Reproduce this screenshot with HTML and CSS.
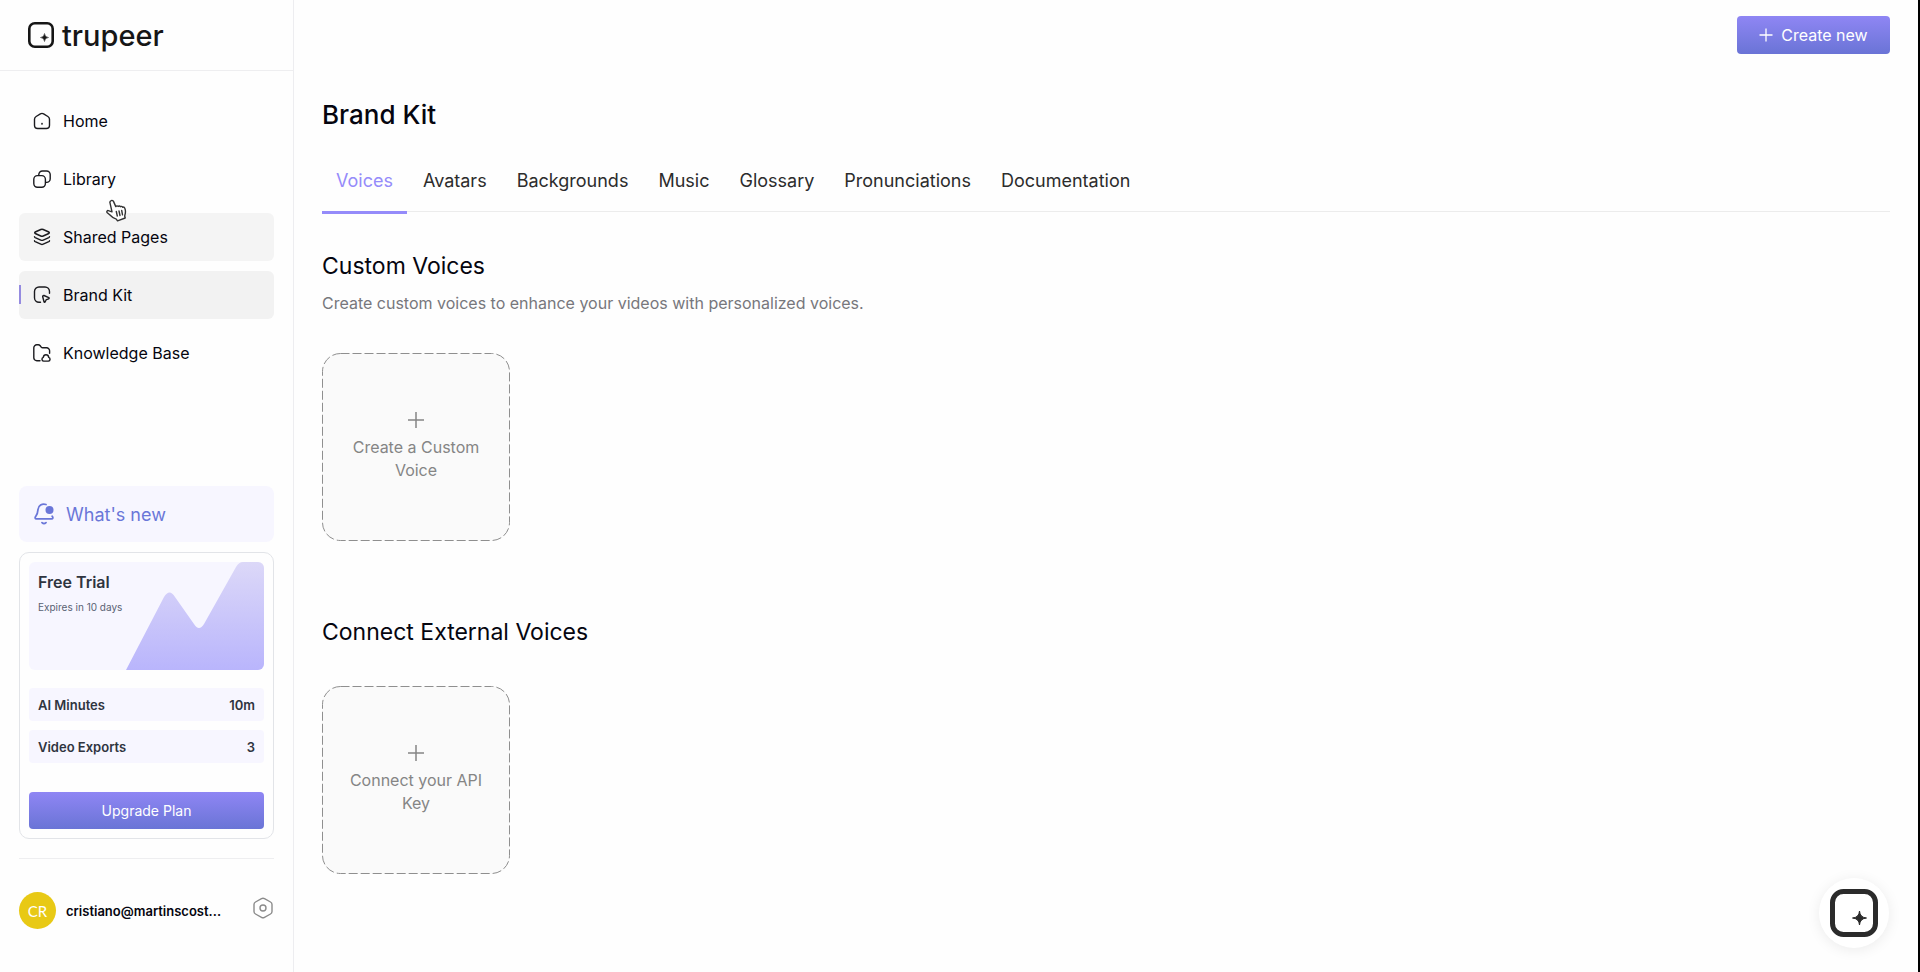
FILE: index.html
```html
<!DOCTYPE html>
<html lang="en">
<head>
  <meta charset="UTF-8">
  <meta name="viewport" content="width=device-width, initial-scale=1.0">
  <title>Brand Kit - trupeer</title>
  <link rel="stylesheet" href="styles.css">
</head>
<body>
  <aside class="sidebar">
    <a class="logo" href="#">
      <svg width="26" height="26" viewBox="0 0 26 26" fill="none">
        <rect x="1.3" y="1.3" width="23.4" height="23.4" rx="5.5" stroke="#161616" stroke-width="2.6"/>
        <path d="M16.5 11.5Q16.800 15.200 20.500 15.500Q16.800 15.800 16.500 19.500Q16.200 15.800 12.500 15.500Q16.200 15.200 16.500 11.500Z" fill="#161616" stroke="#161616" stroke-width=".5"/>
      </svg>
      <span>trupeer</span>
    </a>

    <nav class="nav">
      <a class="nav-item" href="#">
        <svg width="18" height="18" viewBox="0 0 18 18">
          <path d="M7.4 1.9a3 3 0 0 1 3.2 0l4.3 2.6a3.2 3.2 0 0 1 1.6 2.8v6a3.2 3.2 0 0 1-3.2 3.2H4.7a3.2 3.2 0 0 1-3.2-3.2v-6a3.2 3.2 0 0 1 1.6-2.8z"/>
          <circle cx="9" cy="11.8" r=".3"/>
        </svg>
        Home
      </a>
      <a class="nav-item" href="#">
        <svg width="18" height="18" viewBox="0 0 18 18">
          <rect x=".8" y="5.6" width="11.6" height="11.6" rx="3.6"/>
          <path d="M5.8 5.4V4.6A3.6 3.6 0 0 1 9.4 1h4.2a3.6 3.6 0 0 1 3.6 3.6v4.2a3.6 3.6 0 0 1-3.6 3.6h-1"/>
        </svg>
        Library
        <svg class="cursor" width="21" height="23" viewBox="0 0 21 23">
          <path d="M5.2 1.6c1-.5 2 .1 2.4 1l2.2 5c.5-.9 1.8-.9 2.3-.1.6-.8 1.8-.7 2.3.2.7-.6 1.8-.3 2.2.6.9-.4 1.8 0 2.2.9.7 1.7.9 3.5.4 5.6l-.5 2.2.5 2-7.7 2.8-1.2-1.6c-2-.6-4.4-2-6.6-4.4L1 13.4c-.5-1 .2-2 1.3-1.8l3.7 1.2-2-8.9c-.3-1 .2-1.9 1.2-2.3z"/>
          <path d="M10.3 12.5l1 4.5M13 12l1 4.5M15.7 11.5l.8 4.3"/>
        </svg>
      </a>
      <a class="nav-item hover" href="#">
        <svg width="18" height="18" viewBox="0 0 18 18">
          <path d="M7.8 1.5a3 3 0 0 1 2.4 0l5.600 2.500a.8.8 0 0 1 0 1.500l-5.600 2.500a3 3 0 0 1-2.400 0L2.200 5.500a.8.8 0 0 1 0-1.500z"/>
          <path d="M1.500 8.600c0 .5.300.8.700 1l5.600 2.500a3 3 0 0 0 2.400 0l5.600-2.500c.4-.2.700-.5.700-1"/>
          <path d="M1.500 12.700c0 .5.300.8.700 1l5.600 2.500a3 3 0 0 0 2.400 0l5.600-2.500c.4-.2.700-.5.700-1"/>
        </svg>
        Shared Pages
      </a>
      <a class="nav-item active" href="#">
        <svg width="18" height="18" viewBox="0 0 18 18">
          <path d="M7.500 16.200H6A4.500 4.500 0 0 1 1.500 11.700V5.500A4.500 4.500 0 0 1 6 1h6a4.500 4.500 0 0 1 4.500 4.500v1.700"/>
          <path d="M9.700 10.800l1.300 5c.2.600.9.600 1.100.1l.8-1.700c.1-.3.300-.4.500-.5l2.300-.9c.6-.2.600-.9.100-1.200l-4.800-2.100c-.8-.3-1.500.400-1.300 1.300z"/>
        </svg>
        Brand Kit
      </a>
      <a class="nav-item" href="#">
        <svg width="18" height="18" viewBox="0 0 18 18">
          <path d="M7 16.700H3.800A3 3 0 0 1 .8 13.700V3.800a3 3 0 0 1 3-3h1.400c.8 0 1.500.4 2 1l1 1.300c.4.500.9.700 1.500.7h3.900a3 3 0 0 1 3 3v2.400"/>
          <path d="M10.600 17.100a1.900 1.900 0 0 1-.3-3.700c.2-1.700 1.200-2.600 2.700-2.600s2.500.9 2.700 2.600a1.900 1.900 0 0 1-.3 3.700z"/>
        </svg>
        Knowledge Base
      </a>
    </nav>

    <div class="sidebar-bottom">
      <button class="whats-new">
        <svg width="20" height="22" viewBox="0 0 20 22" fill="none" stroke="#6a76d8" stroke-width="1.8" stroke-linecap="round">
          <path d="M12 1.500C8 .2 4.300 2.600 4 6.500c-.2 3-.5 4.500-2.200 6.700-1 1.400-.9 2.700.7 2.700h15c1.600 0 1.700-1.300.7-2.700"/>
          <path d="M8 19.600q2 1.800 4 0"/>
          <circle cx="15.500" cy="7" r="4" fill="#6a76d8" stroke="none"/>
        </svg>
        What's new
      </button>

      <section class="plan-card">
        <div class="plan-banner">
          <svg class="plan-chart" viewBox="0 0 235 108" preserveAspectRatio="xMaxYMax slice">
            <defs>
              <linearGradient id="chartFill" x1="0" y1="0" x2="0" y2="1">
                <stop offset="0" stop-color="#dcd8f8"/>
                <stop offset="1" stop-color="#b9b5fc"/>
              </linearGradient>
            </defs>
            <path d="M97 108L135 35Q140.500 26 146 35L165 62Q170 70 175 62L207 5Q210 0 214 0H235V108Z" fill="url(#chartFill)"/>
          </svg>
          <h2>Free Trial</h2>
          <p>Expires in 10 days</p>
        </div>
        <dl class="usage">
          <div class="usage-row"><dt>AI Minutes</dt><dd>10m</dd></div>
          <div class="usage-row"><dt>Video Exports</dt><dd>3</dd></div>
        </dl>
        <button class="primary upgrade">Upgrade Plan</button>
      </section>

      <div class="user">
        <span class="avatar">CR</span>
        <span class="email">cristiano@martinscost...</span>
        <button class="settings" aria-label="Settings">
          <svg width="22" height="22" viewBox="0 0 22 22" fill="none" stroke="#8b8b8b" stroke-width="1.4">
            <path d="M9.500 1.700a3 3 0 0 1 3 0l6 3.300A3 3 0 0 1 20 7.600v6.800a3 3 0 0 1-1.500 2.600l-6 3.300a3 3 0 0 1-3 0l-6-3.300A3 3 0 0 1 2 14.400V7.600A3 3 0 0 1 3.500 5z"/>
            <circle cx="11" cy="11" r="3"/>
          </svg>
        </button>
      </div>
    </div>
  </aside>

  <main class="main">
    <header class="topbar">
      <button class="primary create">
        <svg width="14" height="14" viewBox="0 0 14 14" stroke="#fff" stroke-width="1.3"><path d="M7 .5v13M.5 7h13"/></svg>
        Create new
      </button>
    </header>

    <h1>Brand Kit</h1>
    <div class="tabs" role="tablist">
      <button class="tab selected" role="tab" aria-selected="true">Voices</button>
      <button class="tab" role="tab">Avatars</button>
      <button class="tab" role="tab">Backgrounds</button>
      <button class="tab" role="tab">Music</button>
      <button class="tab" role="tab">Glossary</button>
      <button class="tab" role="tab">Pronunciations</button>
      <button class="tab" role="tab">Documentation</button>
    </div>

    <section class="voices">
      <h2>Custom Voices</h2>
      <p>Create custom voices to enhance your videos with personalized voices.</p>
      <button class="tile">
        <svg class="tile-outline" viewBox="0 0 188 188"><rect x=".5" y=".5" width="187" height="187" rx="18"/></svg>
        <svg width="16" height="16" viewBox="0 0 16 16" stroke="#858585" stroke-width="1.5"><path d="M8 0v16M0 8h16"/></svg>
        Create a Custom Voice
      </button>
    </section>

    <section class="voices">
      <h2>Connect External Voices</h2>
      <button class="tile">
        <svg class="tile-outline" viewBox="0 0 188 188"><rect x=".5" y=".5" width="187" height="187" rx="18"/></svg>
        <svg width="16" height="16" viewBox="0 0 16 16" stroke="#858585" stroke-width="1.5"><path d="M8 0v16M0 8h16"/></svg>
        Connect your API Key
      </button>
    </section>
  </main>

  <button class="recorder" aria-label="Open recorder">
    <svg width="48" height="48" viewBox="0 0 48 48" fill="none">
      <rect x="2.500" y="2.500" width="43" height="43" rx="11" stroke="#2b2b2b" stroke-width="5"/>
      <path d="M29.500 22Q30 28.500 36.500 29Q30 29.500 29.500 36Q29 29.500 22.500 29Q29 28.500 29.500 22Z" fill="#2b2b2b" stroke="#2b2b2b"/>
    </svg>
  </button>
</body>
</html>
```

FILE: styles.css
```css
* {
  box-sizing: border-box;
}
body {
  margin: 0;
  min-height: 100vh;
  display: flex;
  background: #fefefe;
  border-right: 2px solid #000;
  color: #05050f;
  font-family: Inter, "Liberation Sans", sans-serif;
  font-size: 16px;
}
h1, h2, p, dl, dd {
  margin: 0;
}
a {
  color: inherit;
  text-decoration: none;
}
button {
  font: inherit;
  color: inherit;
  border: none;
  background: none;
  padding: 0;
  cursor: pointer;
}
svg {
  flex-shrink: 0;
}

/* Sidebar */
.sidebar {
  width: 294px;
  flex-shrink: 0;
  display: flex;
  flex-direction: column;
  border-right: 1px solid #ededf0;
}
.logo {
  display: flex;
  align-items: center;
  gap: 8px;
  height: 71px;
  padding-left: 28px;
  border-bottom: 1px solid #eeeef0;
  color: #161616;
  font-size: 29px;
  font-weight: 500;
}
.nav {
  display: flex;
  flex-direction: column;
  gap: 10px;
  padding: 26px 19px;
}
.nav-item {
  position: relative;
  display: flex;
  align-items: center;
  gap: 12px;
  height: 48px;
  padding-left: 14px;
  border-radius: 6px;
}
.nav-item svg {
  fill: none;
  stroke: #1b1b1f;
  stroke-width: 1.4;
  stroke-linecap: round;
  stroke-linejoin: round;
}
.nav-item.hover {
  background: #f4f4f4;
}
.nav-item.active {
  background: #f2f2f2;
}
.nav-item.active::before {
  content: "";
  position: absolute;
  left: 0;
  top: 14px;
  width: 2px;
  height: 19px;
  background: #958be0;
}
.nav-item .cursor {
  position: absolute;
  left: 87px;
  top: 44px;
  z-index: 1;
  fill: #fff;
  stroke: #333;
}
.sidebar-bottom {
  margin-top: auto;
  padding: 0 19px 43px;
}
.whats-new {
  display: flex;
  align-items: center;
  gap: 12px;
  width: 100%;
  height: 56px;
  margin-bottom: 10px;
  padding-left: 15px;
  border-radius: 8px;
  background: #f7f6ff;
  color: #6a76d8;
  font-size: 18px;
}
.plan-card {
  padding: 9px;
  border: 1px solid #e2e4e8;
  border-radius: 10px;
}
.plan-banner {
  position: relative;
  height: 108px;
  padding: 10px 9px;
  border-radius: 6px;
  background: #f7f6ff;
  overflow: hidden;
  color: #2f3440;
}
.plan-chart {
  position: absolute;
  inset: 0;
  width: 100%;
  height: 100%;
}
.plan-banner h2 {
  font-size: 16px;
  line-height: 20px;
  font-weight: 600;
}
.plan-banner p {
  margin-top: 7px;
  font-size: 10px;
  line-height: 16px;
  color: #596273;
}
.usage {
  display: flex;
  flex-direction: column;
  gap: 9px;
  margin: 18px 0 29px;
}
.usage-row {
  display: flex;
  align-items: center;
  justify-content: space-between;
  height: 33px;
  padding: 0 9px;
  border-radius: 4px;
  background: #f7f6ff;
  color: #2f3440;
  font-size: 13px;
  font-weight: 600;
}
.primary {
  display: flex;
  align-items: center;
  justify-content: center;
  gap: 8px;
  border-radius: 4px;
  background: linear-gradient(#8f86f4, #6a74d6);
  color: #fff;
}
.upgrade {
  width: 100%;
  height: 37px;
  font-size: 14px;
}
.user {
  display: flex;
  align-items: center;
  margin-top: 19px;
  padding-top: 33px;
  border-top: 1px solid #eeeef0;
}
.avatar {
  display: flex;
  align-items: center;
  justify-content: center;
  width: 37px;
  height: 37px;
  margin-right: 10px;
  border-radius: 50%;
  background: #e8c915;
  color: #fff;
  font-family: Lato, sans-serif;
  font-size: 15px;
}
.email {
  font-size: 13px;
  font-weight: 600;
}
.settings {
  display: flex;
  margin: 0 0 6px auto;
}

/* Main content */
.main {
  flex: 1;
  padding: 0 28px;
}
.topbar {
  display: flex;
  justify-content: flex-end;
  padding: 16px 0;
}
.create {
  width: 153px;
  height: 38px;
}
h1 {
  margin-top: 27px;
  font-size: 26px;
  line-height: 36px;
  font-weight: 500;
}
.tabs {
  display: flex;
  gap: 2px;
  margin-top: 29px;
  border-bottom: 1px solid #ececec;
}
.tab {
  height: 52px;
  margin-bottom: -3px;
  padding: 0 14px 12px;
  border-bottom: 3px solid transparent;
  color: #2c2c2c;
  font-size: 18px;
}
.tab.selected {
  border-color: #958bfa;
  color: #958bfa;
}
.voices {
  margin-top: 38px;
}
.voices + .voices {
  margin-top: 75px;
}
.voices h2 {
  font-size: 23px;
  line-height: 32px;
  font-weight: 400;
}
.voices p {
  margin-top: 9px;
  line-height: 24px;
  color: #77777c;
}
.tile {
  position: relative;
  display: flex;
  flex-direction: column;
  align-items: center;
  justify-content: center;
  gap: 8px;
  width: 188px;
  height: 188px;
  margin-top: 38px;
  padding: 0 20px;
  border-radius: 18px;
  background: #fafafa;
  color: #858585;
  line-height: 23px;
}
.tile-outline {
  position: absolute;
  inset: 0;
  fill: none;
  stroke: #8f8f8f;
  stroke-dasharray: 9 3;
}

/* Floating recorder button */
.recorder {
  position: fixed;
  right: 31px;
  bottom: 24px;
  display: flex;
  align-items: center;
  justify-content: center;
  width: 70px;
  height: 70px;
  border-radius: 50%;
  background: #fff;
  box-shadow: 0 2px 14px rgba(0, 0, 0, 0.08);
}
```
